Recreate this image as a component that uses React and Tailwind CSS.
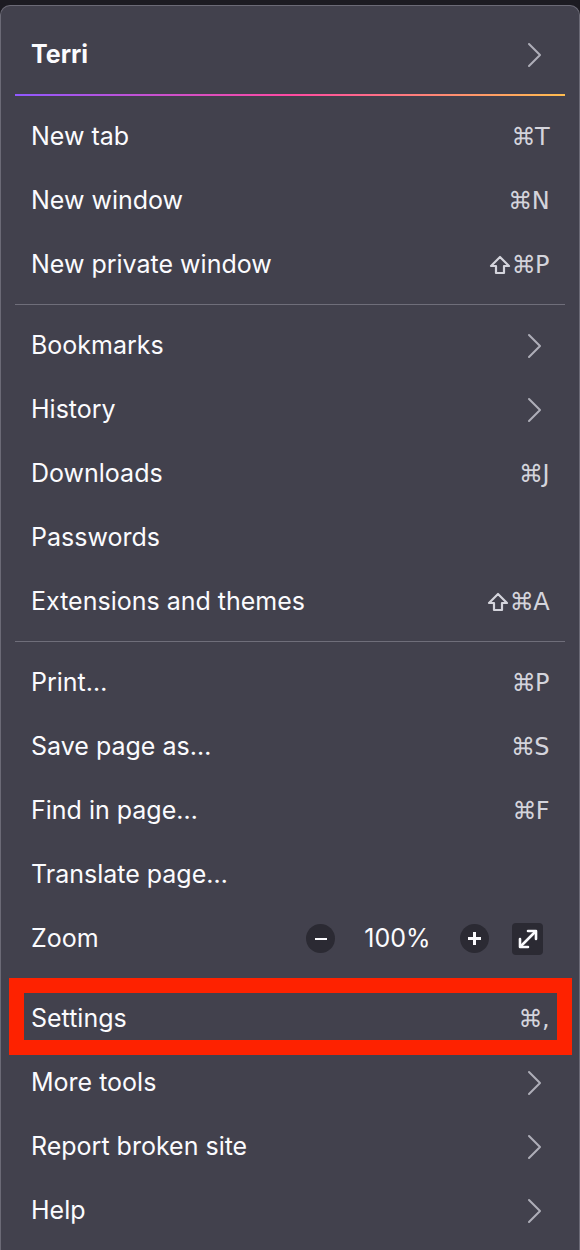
import React from 'react';

const FONT = { fontFamily: 'Inter, "Open Sans", "DejaVu Sans", sans-serif' };

// Thin chevron used for submenu rows
function Chevron() {
    return (
        <svg width="15" height="26" viewBox="0 0 15 26" className="shrink-0 mr-[7px]">
            <polyline points="2,2 13,13 2,24" fill="none" stroke="#aeaeb8" strokeWidth="2" strokeLinecap="round" strokeLinejoin="round" />
        </svg>
    );
}

// Outline shift arrow, as drawn by macOS menus
function ShiftGlyph() {
    return (
        <svg width="22" height="20" viewBox="0 0 22 20" className="mr-[1px]">
            <path d="M11 2 L20 11 L15 11 L15 18 L7 18 L7 11 L2 11 Z" fill="none" stroke="#d4d4dc" strokeWidth="2.2" strokeLinejoin="round" />
        </svg>
    );
}

function Shortcut({ keys, shift }) {
    return (
        <span className="flex items-center text-[24px] text-[#d4d4dc] tracking-tight" style={{ fontFamily: '"DejaVu Sans", Inter, sans-serif' }}>
            {shift && <ShiftGlyph />}
            {keys}
        </span>
    );
}

function Row({ label, right, bold }) {
    return (
        <div className="h-16 flex items-center justify-between pl-[30px] pr-[30px]">
            <span className={`text-[25px] text-[#fbfbfe] ${bold ? 'font-bold' : ''}`}>{label}</span>
            {right}
        </div>
    );
}

function Separator() {
    return <div className="mx-[14px] mt-[7px] mb-[9px] h-px bg-[#6f6e7a]" />;
}

export default function App() {
    const chev = <Chevron />;
    return (
        <div className="w-[580px] h-[1250px] bg-[#1c1b22] pt-[5px] overflow-hidden" style={FONT}>
            <div className="h-full bg-[#42414d] rounded-t-[10px] border-t border-x border-[#6b6a76] pt-[17px]">
                <Row label="Terri" bold right={chev} />
                <div
                    className="mx-[14px] mt-[7px] mb-[9px] h-[1.5px]"
                    style={{ background: 'linear-gradient(90deg, #9059ff, #ff4aa2 50%, #ffbd4f)' }}
                />
                <Row label="New tab" right={<Shortcut keys="⌘T" />} />
                <Row label="New window" right={<Shortcut keys="⌘N" />} />
                <Row label="New private window" right={<Shortcut shift keys="⌘P" />} />
                <Separator />
                <Row label="Bookmarks" right={chev} />
                <Row label="History" right={chev} />
                <Row label="Downloads" right={<Shortcut keys="⌘J" />} />
                <Row label="Passwords" />
                <Row label="Extensions and themes" right={<Shortcut shift keys="⌘A" />} />
                <Separator />
                <Row label="Print…" right={<Shortcut keys="⌘P" />} />
                <Row label="Save page as…" right={<Shortcut keys="⌘S" />} />
                <Row label="Find in page…" right={<Shortcut keys="⌘F" />} />
                <Row label="Translate page…" />

                {/* Zoom controls */}
                <div className="h-16 mb-4 flex items-center pl-[30px] pr-[36px]">
                    <span className="text-[25px] text-[#fbfbfe] flex-1">Zoom</span>
                    <div className="w-[29px] h-[29px] rounded-full bg-[#2b2a33] flex items-center justify-center">
                        <div className="w-[12px] h-[2px] bg-[#fbfbfe]" />
                    </div>
                    <span className="text-[25px] text-[#fbfbfe] w-[125px] text-center">100%</span>
                    <div className="w-[29px] h-[29px] rounded-full bg-[#2b2a33] flex items-center justify-center relative">
                        <div className="w-[13px] h-[2.5px] bg-[#fbfbfe]" />
                        <div className="absolute w-[2.5px] h-[13px] bg-[#fbfbfe]" />
                    </div>
                    <div className="ml-[23px] w-[31px] h-[32px] rounded-[4px] bg-[#2b2a33] flex items-center justify-center">
                        <svg width="22" height="22" viewBox="0 0 22 22" fill="none" stroke="#fbfbfe" strokeWidth="2.6" strokeLinecap="round" strokeLinejoin="round">
                            <line x1="4" y1="18" x2="18" y2="4" />
                            <polyline points="11,3 19,3 19,11" />
                            <polyline points="3,11 3,19 11,19" />
                        </svg>
                    </div>
                </div>

                <div className="relative">
                    <Row label="Settings" right={<Shortcut keys="⌘," />} />
                    <div className="absolute left-[8px] right-[7px] top-[-9px] bottom-[-4px] border-[15px] border-[#fe2200] pointer-events-none" />
                </div>
                <Row label="More tools" right={chev} />
                <Row label="Report broken site" right={chev} />
                <Row label="Help" right={chev} />
            </div>
        </div>
    );
}
